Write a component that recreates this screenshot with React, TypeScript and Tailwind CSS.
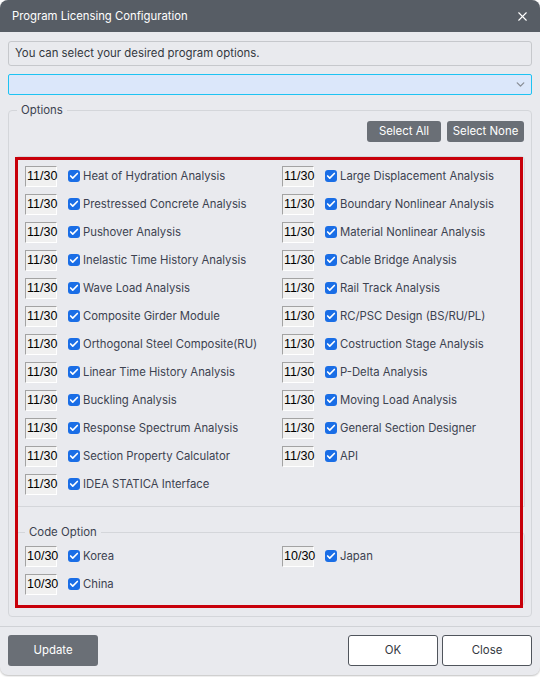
import { Check, ChevronDown, X } from 'lucide-react';

const LEFT = [
  'Heat of Hydration Analysis',
  'Prestressed Concrete Analysis',
  'Pushover Analysis',
  'Inelastic Time History Analysis',
  'Wave Load Analysis',
  'Composite Girder Module',
  'Orthogonal Steel Composite(RU)',
  'Linear Time History Analysis',
  'Buckling Analysis',
  'Response Spectrum Analysis',
  'Section Property Calculator',
  'IDEA STATICA Interface',
];

const RIGHT = [
  'Large Displacement Analysis',
  'Boundary Nonlinear Analysis',
  'Material Nonlinear Analysis',
  'Cable Bridge Analysis',
  'Rail Track Analysis',
  'RC/PSC Design (BS/RU/PL)',
  'Costruction Stage Analysis',
  'P-Delta Analysis',
  'Moving Load Analysis',
  'General Section Designer',
  'API',
];

function Item({ date, label }: { date: string; label: string }) {
  return (
    <div className="flex h-[28px] items-center">
      <div className="h-[21px] w-[32px] border-t border-l border-t-[#a3a3a3] border-l-[#a3a3a3] border-r border-b border-r-white border-b-white bg-[#f0f0f0] pl-[1px] pt-[1px] font-['Liberation_Sans',sans-serif] text-[12.5px] leading-[16px] text-black">
        {date}
      </div>
      <span className="ml-[11px] flex h-[12px] w-[12px] items-center justify-center rounded-[3px] bg-[#1a6ee6]">
        <Check className="h-[10px] w-[10px] text-white" strokeWidth={4} />
      </span>
      <span className="ml-[3px] text-[11.3px] text-[#3c4250]">{label}</span>
    </div>
  );
}

export default function App() {
  return (
    <div className="h-[677px] w-[540px] bg-white font-['Inter',sans-serif]">
      <div className="h-[675px] overflow-hidden rounded-lg bg-[#e9eaee] shadow-[0_1px_2px_rgba(0,0,0,0.25)]">
        <div className="flex h-[32px] items-center justify-between bg-[#575d65] pl-[12px] pr-[10px] text-white">
          <span className="text-[11.3px]">Program Licensing Configuration</span>
          <X className="h-[15px] w-[15px]" strokeWidth={1.8} />
        </div>

        <div className="px-[8px] pt-[9px]">
          <div className="flex h-[25px] items-center rounded-[3px] border border-[#c6c8cc] px-[6px] text-[11.4px] text-[#333840]">
            You can select your desired program options.
          </div>
          <div className="mt-[8px] flex h-[21px] items-center justify-end rounded-[2px] border border-[#1ec3f2] bg-[#dbe7fa] pr-[4px]">
            <ChevronDown className="h-[13px] w-[13px] text-[#8a8f96]" strokeWidth={2.5} />
          </div>

          <fieldset className="mt-[7px] h-[515px] rounded-[4px] border border-[#d4d6da] px-[6px]">
            <legend className="ml-[2px] px-[4px] text-[11.4px] text-[#3c4250]">Options</legend>
            <div className="flex justify-end gap-[6px] pr-[1px] pt-[2px]">
              <button className="h-[21px] w-[74px] rounded-[3px] bg-[#6a6f76] text-[11.4px] text-white">
                Select All
              </button>
              <button className="h-[21px] w-[77px] rounded-[3px] bg-[#6a6f76] text-[11.4px] text-white">
                Select None
              </button>
            </div>

            <div className="relative mt-[14px]">
              <div className="h-[351px] rounded-t-[4px] border border-b border-[#d4d6da] pl-[9px] pt-[5px]">
                <div className="grid grid-cols-[257px_1fr]">
                  <div>
                    {LEFT.map((l) => (
                      <Item key={l} date="11/30" label={l} />
                    ))}
                  </div>
                  <div>
                    {RIGHT.map((l) => (
                      <Item key={l} date="11/30" label={l} />
                    ))}
                  </div>
                </div>
              </div>

              <fieldset className="mt-[17px] h-[82px] rounded-[4px] border border-[#d4d6da] pl-[9px]">
                <legend className="ml-0 px-[4px] text-[11.4px] text-[#3c4250]">Code Option</legend>
                <div className="mt-[1px] grid grid-cols-[257px_1fr]">
                  <Item date="10/30" label="Korea" />
                  <Item date="10/30" label="Japan" />
                  <Item date="10/30" label="China" />
                </div>
              </fieldset>

              {/* annotation frame drawn over the option lists */}
              <div className="pointer-events-none absolute left-[0px] right-[2px] top-[1px] bottom-[-2px] border-[3px] border-[#c8000a]" />
            </div>
          </fieldset>
        </div>

        <div className="mt-[9px] flex items-center border-t border-[#d0d2d6] px-[8px] pt-[8px]">
          <button className="h-[31px] w-[90px] rounded-[3px] bg-[#6a6f76] text-[11.4px] text-white">Update</button>
          <div className="ml-auto flex gap-[4px]">
            <button className="h-[31px] w-[90px] rounded-[3px] border border-[#50555c] bg-white text-[11.4px] text-[#333840]">
              OK
            </button>
            <button className="h-[31px] w-[90px] rounded-[3px] border border-[#50555c] bg-white text-[11.4px] text-[#333840]">
              Close
            </button>
          </div>
        </div>
      </div>
    </div>
  );
}
